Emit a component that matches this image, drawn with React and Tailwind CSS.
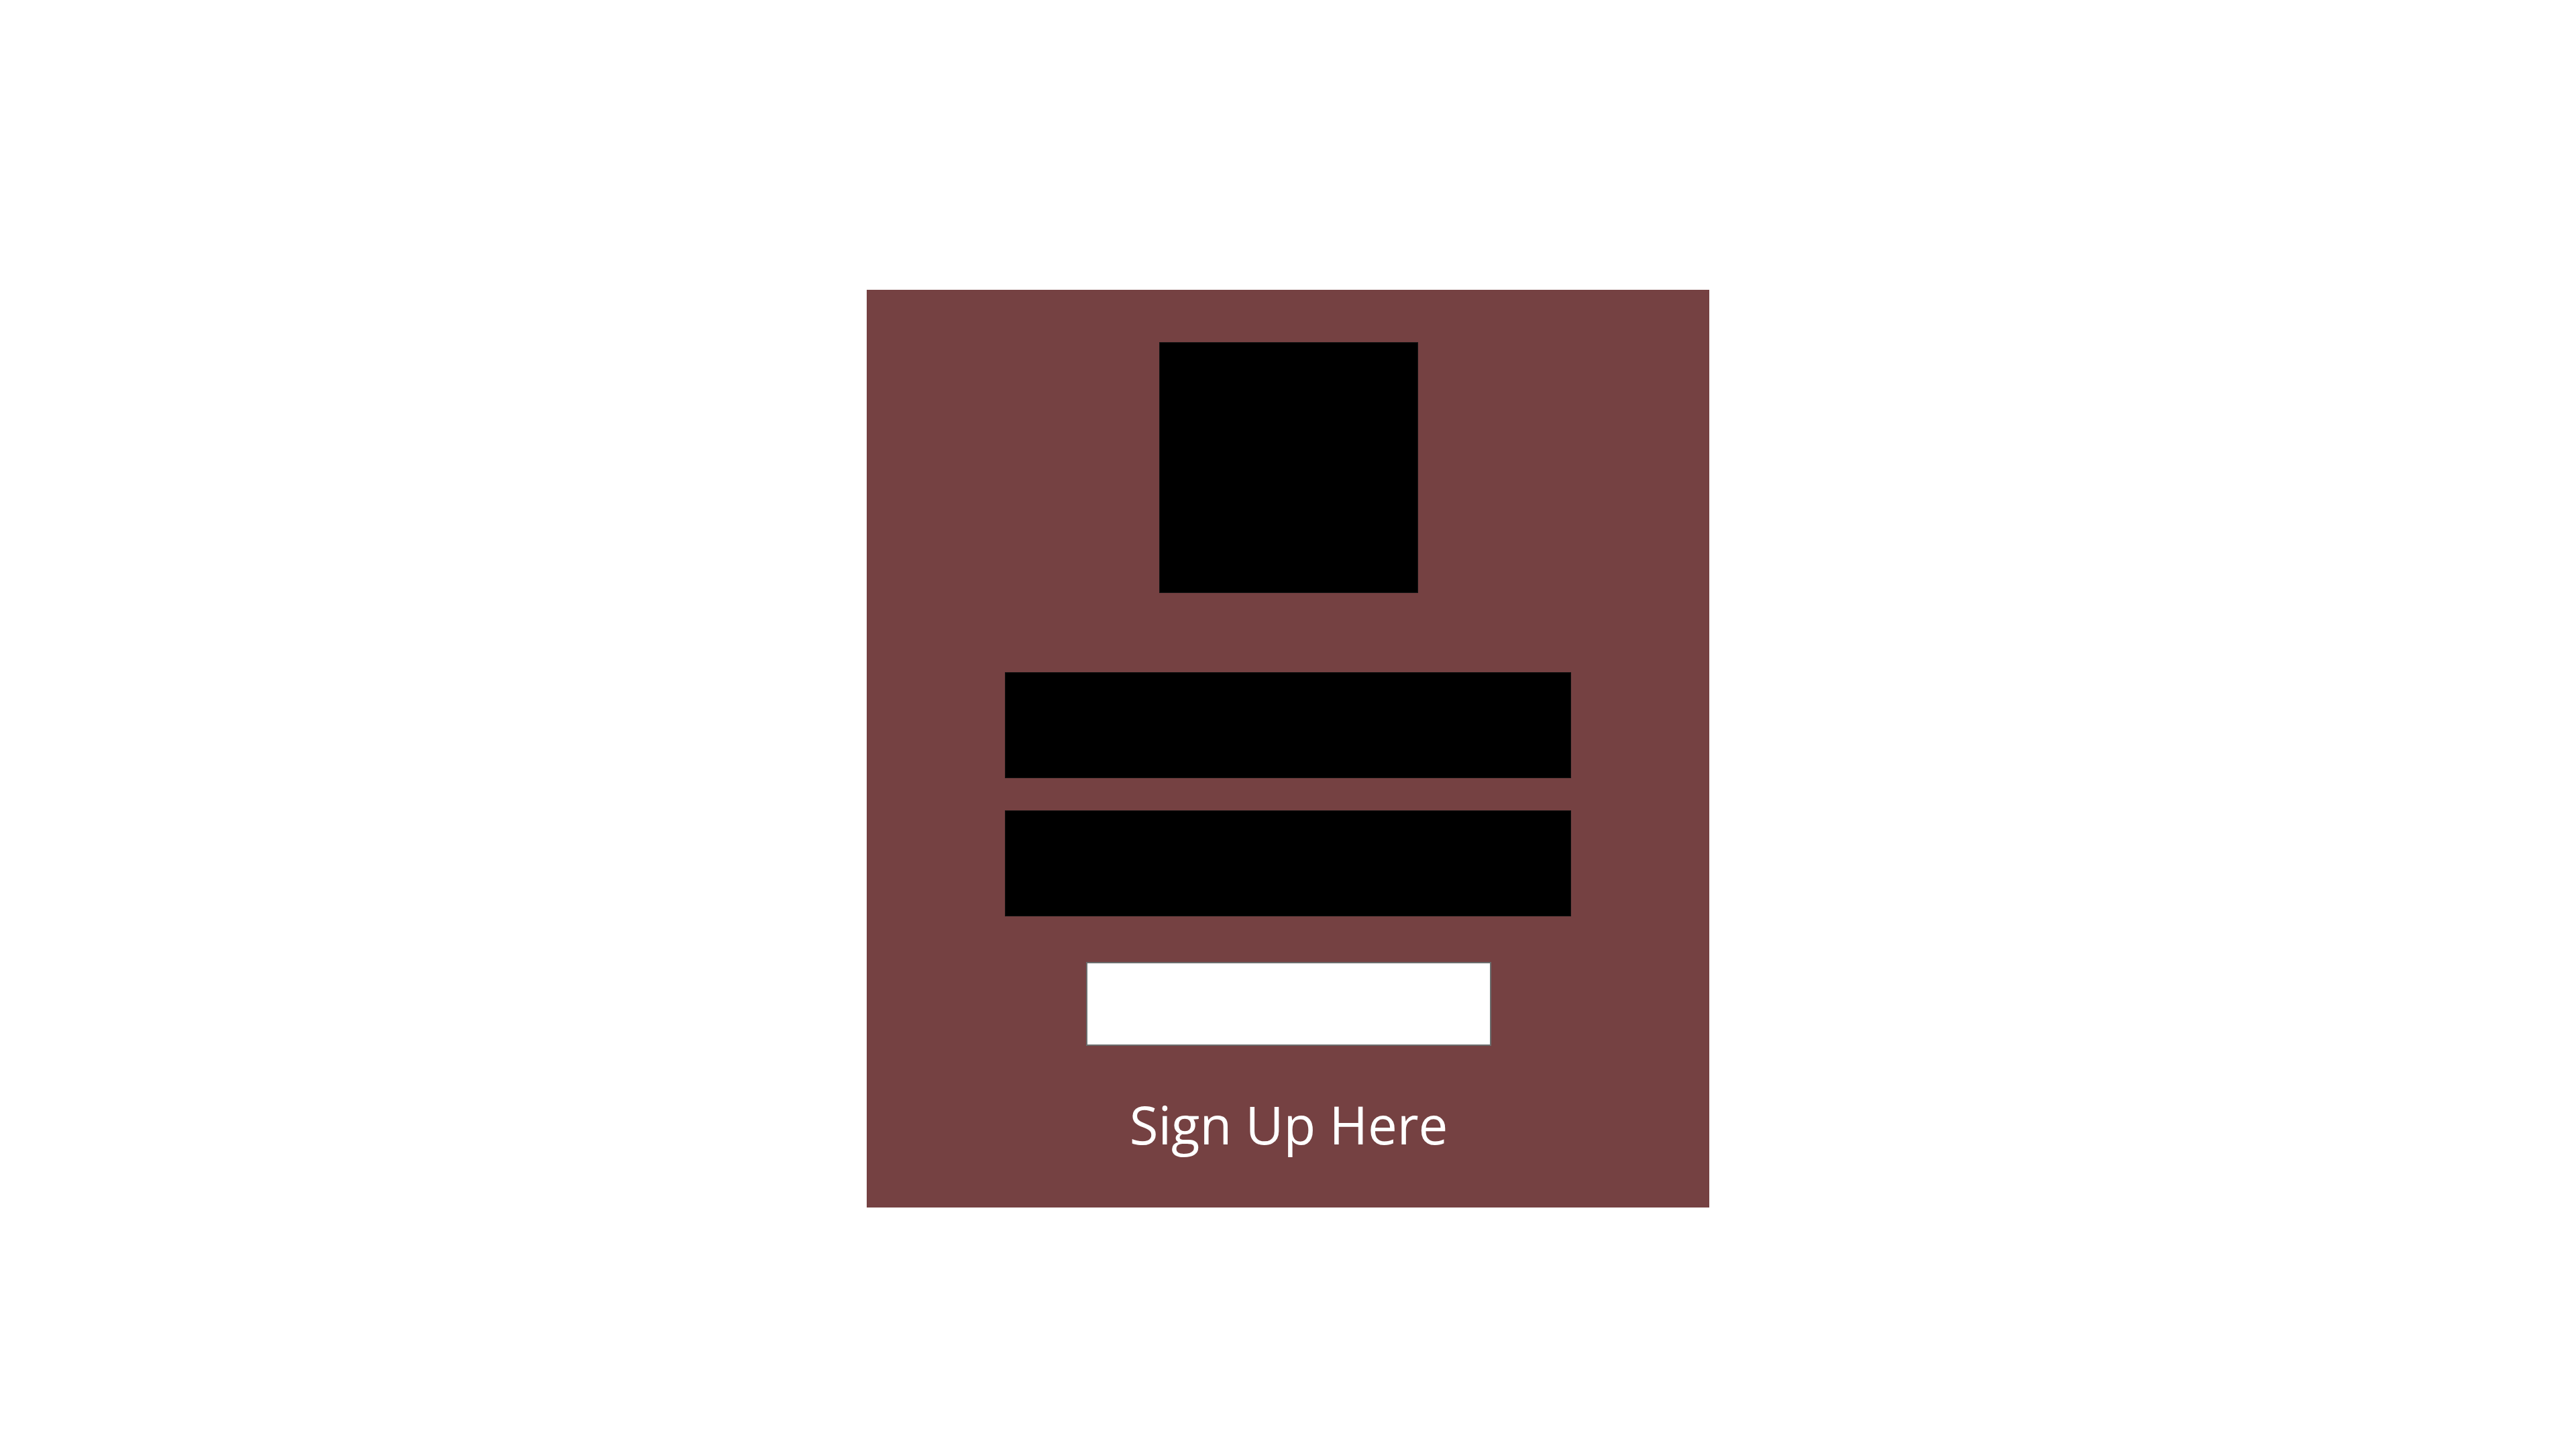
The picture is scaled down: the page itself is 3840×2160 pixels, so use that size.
export default function App() {
  return (
    <div className="min-h-screen w-full bg-white flex justify-center pt-[432px]">
      <div className="w-[1256px] h-[1368px] bg-[#754142] flex flex-col items-center pt-[78px] pl-[2px]">
        <div className="w-[386px] h-[374px] bg-black border border-[#151515]" />
        <input
          type="text"
          className="mt-[118px] ml-[-2px] w-[844px] h-[158px] bg-black border border-[#111111] outline-none"
        />
        <input
          type="password"
          className="mt-[48px] ml-[-2px] w-[844px] h-[158px] bg-black border border-[#111111] outline-none"
        />
        <button
          type="button"
          className="mt-[68px] w-[604px] h-[125px] bg-white border-2 border-[#6b6d6d]"
        />
        <a
          href="#"
          className="mt-[67px] text-white text-[78px] leading-[100px] font-['Open_Sans',sans-serif]"
        >
          Sign Up Here
        </a>
      </div>
    </div>
  );
}
